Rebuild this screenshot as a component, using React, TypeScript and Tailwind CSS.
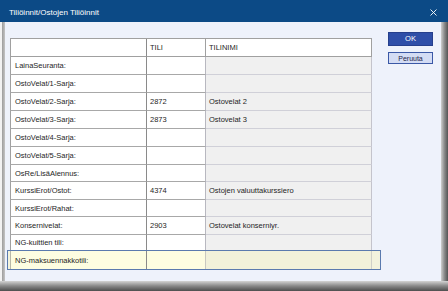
import React from "react";

type Row = { label: string; tili: string; nimi: string; h: string };

const rows: Row[] = [
  { label: "LainaSeuranta:", tili: "", nimi: "", h: "h-[18px]" },
  { label: "OstoVelat/1-Sarja:", tili: "", nimi: "", h: "h-[18px]" },
  { label: "OstoVelat/2-Sarja:", tili: "2872", nimi: "Ostovelat 2", h: "h-[18px]" },
  { label: "OstoVelat/3-Sarja:", tili: "2873", nimi: "Ostovelat 3", h: "h-[18px]" },
  { label: "OstoVelat/4-Sarja:", tili: "", nimi: "", h: "h-[18px]" },
  { label: "OstoVelat/5-Sarja:", tili: "", nimi: "", h: "h-[18px]" },
  { label: "OsRe/LisäAlennus:", tili: "", nimi: "", h: "h-[17px]" },
  { label: "KurssiErot/Ostot:", tili: "4374", nimi: "Ostojen valuuttakurssiero", h: "h-[18px]" },
  { label: "KurssiErot/Rahat:", tili: "", nimi: "", h: "h-[17px]" },
  { label: "Konsernivelat:", tili: "2903", nimi: "Ostovelat konserniyr.", h: "h-[18px]" },
  { label: "NG-kuittien tili:", tili: "", nimi: "", h: "h-[16px]" },
];

export default function App() {
  return (
    <div className="w-[448px] h-[291px] flex flex-col bg-[#eef2fb] font-['Liberation_Sans',Arial,sans-serif] text-[#1e1e1e] overflow-hidden">
      {/* Title bar */}
      <div className="h-[22px] shrink-0 bg-[#0c4a86] flex items-center justify-between pl-[9px] pr-[11px] pt-[3px]">
        <span className="text-white text-[8px] leading-none">Tiliöinnit/Ostojen Tiliöinnit</span>
        <svg width="7" height="7" viewBox="0 0 7 7" className="mt-[-1px]">
          <path d="M0.5 0.5 L6.5 6.5 M6.5 0.5 L0.5 6.5" stroke="#ffffff" strokeWidth="0.9" />
        </svg>
      </div>

      {/* Body */}
      <div className="flex-1 flex min-h-0">
        <div className="w-[2px] bg-[#f2f2f2]" />
        <div className="w-[3px] bg-gradient-to-r from-[#9c9c9c] to-[#c4c4c4]" />

        <div className="flex pl-[5px]">
          {/* Table */}
          <div className="w-[362px] mt-[16px] flex flex-col text-[7.5px] leading-none">
            {/* Header */}
            <div className="flex h-[19px] border-t border-[#a0a0a0] bg-white">
              <div className="w-[137px] border-l border-r border-b border-l-[#a0a0a0] border-r-[#8a8a8a] border-b-[#a0a0a0]" />
              <div className="w-[59px] border-r border-b border-[#a0a0a0] flex items-center pl-[3px] pt-[1px]">TILI</div>
              <div className="w-[166px] border-r border-b border-[#a0a0a0] flex items-center pl-[3px] pt-[1px]">TILINIMI</div>
            </div>
            {rows.map((r) => (
              <div key={r.label} className={`flex ${r.h}`}>
                <div className="w-[137px] bg-white border-l border-r border-b border-l-[#a0a0a0] border-r-[#8a8a8a] border-b-[#a8a8a8] flex items-center pl-[4px] pt-[1px]">
                  {r.label}
                </div>
                <div className="w-[59px] bg-white border-r border-b border-r-[#b8b8c0] border-b-[#a8a8a8] flex items-center pl-[3px] pt-[1px]">
                  {r.tili}
                </div>
                <div className="w-[166px] bg-[#f0f0f0] border-r border-b border-r-[#c4c4cc] border-b-[#d0d0d8] flex items-center pl-[3px] pt-[1px]">
                  {r.nimi}
                </div>
              </div>
            ))}
            {/* Highlighted row */}
            <div className="relative -mt-[1px] -ml-[3px] w-[374px] h-[20px] border border-[#5a7aae] bg-[#f3f3dd] flex pl-[2px]">
              <div className="flex h-[18px]">
                <div className="w-[137px] bg-[#fdfde1] border-l border-r border-l-[#b8b8a8] border-r-[#8a8a8a] flex items-center pl-[4px] pt-[1px]">
                  NG-maksuennakkotili:
                </div>
                <div className="w-[59px] bg-[#fdfde1] border-r border-[#c8c8c0] flex items-center pl-[3px]" />
                <div className="w-[166px] bg-[#f1f1da] border-r border-[#d0d0c8] flex items-center pl-[3px]" />
              </div>
            </div>
          </div>

          {/* Buttons */}
          <div className="ml-[16px] mt-[10px] w-[45px] flex flex-col">
            <div className="h-[14px] bg-[#2f4fa8] border border-[#263f8c] flex items-center justify-center text-white text-[7.5px] leading-none">
              OK
            </div>
            <div className="mt-[6px] h-[12px] bg-[#d3dcf4] border border-[#3a58a6] flex items-center justify-center text-[#1c2448] text-[7px] leading-none">
              Peruuta
            </div>
          </div>
        </div>

        <div className="flex-1" />
        <div className="w-[7px] bg-gradient-to-r from-[#cfcfcf] via-[#8a8a8a] to-[#555555]" />
      </div>

      {/* Bottom frame */}
      <div className="h-[10px] shrink-0 bg-gradient-to-b from-[#d4d4d4] via-[#888888] to-[#4e4e4e]" />
    </div>
  );
}
